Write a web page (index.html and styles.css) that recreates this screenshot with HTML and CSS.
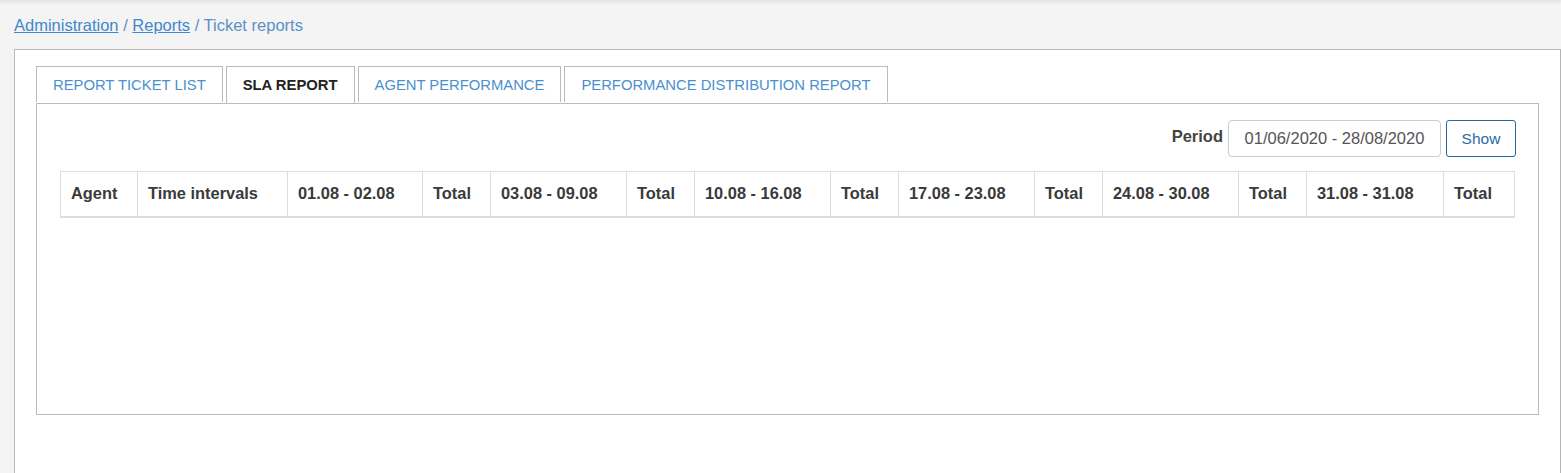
FILE: index.html
```html
<!DOCTYPE html>
<html>
<head>
<meta charset="utf-8">
<link rel="stylesheet" href="styles.css">
</head>
<body>
<div class="topshadow"></div>
<div class="page">
  <div class="breadcrumb">
    <a href="#">Administration</a> / <a href="#">Reports</a> / <span>Ticket reports</span>
  </div>
  <div class="panel">
    <ul class="tabs">
      <li class="tab">REPORT TICKET LIST</li>
      <li class="tab active">SLA REPORT</li>
      <li class="tab">AGENT PERFORMANCE</li>
      <li class="tab">PERFORMANCE DISTRIBUTION REPORT</li>
    </ul>
    <div class="tab-content">
      <div class="filter">
        <label class="filter-label">Period</label>
        <div class="date-input">01/06/2020 - 28/08/2020</div>
        <button class="btn-show">Show</button>
      </div>
      <table class="report">
        <colgroup>
          <col class="c77"><col class="c150"><col class="c135"><col class="c68">
          <col class="c136"><col class="c68"><col class="c136"><col class="c68">
          <col class="c136"><col class="c68"><col class="c136"><col class="c68">
          <col class="c137"><col class="c71">
        </colgroup>
        <thead>
          <tr>
            <th>Agent</th>
            <th>Time intervals</th>
            <th>01.08 - 02.08</th>
            <th>Total</th>
            <th>03.08 - 09.08</th>
            <th>Total</th>
            <th>10.08 - 16.08</th>
            <th>Total</th>
            <th>17.08 - 23.08</th>
            <th>Total</th>
            <th>24.08 - 30.08</th>
            <th>Total</th>
            <th>31.08 - 31.08</th>
            <th>Total</th>
          </tr>
        </thead>
      </table>
    </div>
  </div>
</div>
</body>
</html>
```

FILE: styles.css
```css
html, body {
  margin: 0;
  padding: 0;
}
body {
  background: #f4f4f4;
  font-family: "Liberation Sans", Arial, sans-serif;
  color: #333;
  overflow: hidden;
}
.topshadow {
  height: 0;
  box-shadow: 0 0 4px 1px rgba(0, 0, 0, 0.18);
}
.page {
  padding-left: 14px;
}
.breadcrumb {
  font-size: 16.5px;
  line-height: 21px;
  padding-top: 15px;
  height: 49px;
  box-sizing: border-box;
  color: #5b91c6;
}
.breadcrumb a {
  color: #3f88cb;
  text-decoration: underline;
}
.breadcrumb span {
  color: #5b91c6;
}
.panel {
  background: #fff;
  border: 1px solid #bbb;
  border-right-color: #b4b4b4;
  padding: 16px 21px 0 21px;
  height: 460px;
}
.tabs {
  list-style: none;
  margin: 0;
  padding: 0;
  display: flex;
  gap: 3px;
  position: relative;
  z-index: 1;
}
.tab {
  border: 1px solid #bbb;
  border-bottom: none;
  height: 36px;
  box-sizing: border-box;
  padding: 0 16px;
  font-size: 14.8px;
  line-height: 36px;
  color: #4a8fd0;
  background: #fff;
}
.tab.active {
  color: #222;
  font-weight: bold;
  height: 37px;
}
.tab-content {
  border: 1px solid #bbb;
  height: 312px;
  box-sizing: border-box;
  padding: 16px 23px 0 23px;
}
.filter {
  display: flex;
  justify-content: flex-end;
  align-items: center;
  margin-right: -1px;
}
.filter-label {
  font-size: 16.5px;
  font-weight: bold;
  color: #444;
  margin-right: 5px;
  position: relative;
  top: -2px;
}
.date-input {
  width: 213px;
  height: 37px;
  box-sizing: border-box;
  border: 1px solid #ccc;
  border-radius: 4px;
  font-size: 16.5px;
  line-height: 35px;
  color: #555;
  text-align: center;
}
.btn-show {
  margin-left: 5px;
  width: 70px;
  height: 37px;
  box-sizing: border-box;
  border: 1px solid #2466a6;
  border-radius: 3px;
  background: #fff;
  color: #2b6aa5;
  font-family: "Liberation Sans", Arial, sans-serif;
  font-size: 15.5px;
  padding: 0;
}
.report {
  margin-top: 14px;
  border-collapse: collapse;
  table-layout: fixed;
  width: 1454px;
}
.report th {
  border: 1px solid #ddd;
  border-bottom: 2px solid #ddd;
  text-align: left;
  font-size: 16.4px;
  font-weight: bold;
  color: #3a3a3a;
  padding: 0 10px;
  height: 45px;
  box-sizing: border-box;
  white-space: nowrap;
}
.c77 { width: 77px; }
.c150 { width: 150px; }
.c135 { width: 135px; }
.c68 { width: 68px; }
.c136 { width: 136px; }
.c137 { width: 137px; }
.c71 { width: 71px; }
```
